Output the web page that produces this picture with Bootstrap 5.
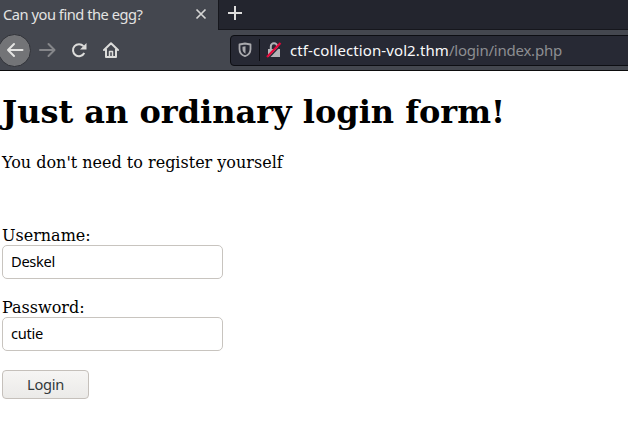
<!DOCTYPE html>
<html lang="en">
<head>
<meta charset="utf-8">
<title>Can you find the egg?</title>
<link rel="stylesheet" href="https://cdn.jsdelivr.net/npm/bootstrap@5.3.0/dist/css/bootstrap.min.css">
<style>
body{font-family:"DejaVu Serif",serif;font-size:16px;line-height:19px;color:#000;background:#fff;overflow:hidden}
.ui-font{font-family:"Noto Sans",sans-serif}
.tab-strip{height:30px;background:#23252e}
.page-tab{width:218px;background:#44474f;color:#e3e3e2;font-size:14.67px;letter-spacing:-.47px;line-height:28px;padding-left:3px;padding-right:11px}
.strip-rest{border-left:1px solid #16171d;border-bottom:1px solid #16171d;padding-left:9px}
.tool-bar{height:41px;background:#44474f;border-bottom:1px solid #0c0c0d}
.back-btn{width:33px;height:33px;margin-left:-2px;margin-right:7px;border-radius:50%;background:#737477;border:1px solid #303238}
.reload{margin-left:15px}
.home{margin-left:16px}
.url-box{height:31px;margin-left:111px;margin-right:-6px;background:#272934;border:1px solid #0d0e13;border-radius:4px;color:#8d8e92;font-size:15px;letter-spacing:-.23px;padding-left:7px}
.url-box b{font-weight:400;color:#f9f9fa;letter-spacing:.1px}
.split{width:1px;height:22px;background:#0d0e13;margin-left:7px;margin-right:6px}
.page{padding:22px 2px 0}
.page h1{font-size:32px;line-height:38px;font-weight:700;margin-bottom:22px}
.page p{margin-bottom:54px}
.field{width:221px;height:34px;padding:0 8px 2px;border:1px solid #c8c4bf;border-radius:5px;font-size:14.67px;letter-spacing:-.3px;color:#000;margin-bottom:19px}
.login{width:87px;height:29px;padding:0;border:1px solid #c5c0bb;border-radius:4px;background:linear-gradient(#f6f5f4,#ebeae8);color:#33393b;font-size:14.67px;letter-spacing:-.3px;line-height:27px}
</style>
<script src="https://cdn.jsdelivr.net/npm/bootstrap@5.3.0/dist/js/bootstrap.bundle.min.js"></script>
</head>
<body>
<header class="ui-font">
  <div class="tab-strip d-flex">
    <div class="page-tab d-flex justify-content-between"><span class="text-nowrap">Can you find the egg?</span>
      <svg class="mt-2" width="12" height="12" viewBox="0 0 12 12" stroke="#d5d5d4" stroke-width="1.7"><path d="M1.5 1.5l9 9M10.5 1.5l-9 9"/></svg>
    </div>
    <div class="strip-rest flex-grow-1"><svg class="d-block" width="16" height="27" viewBox="0 0 16 27" stroke="#dededd" stroke-width="2"><path d="M0 13h14M7 6v14"/></svg></div>
  </div>
  <div class="tool-bar d-flex align-items-center">
    <div class="back-btn d-flex align-items-center justify-content-center flex-shrink-0"><svg width="18" height="16" viewBox="0 0 18 16" fill="none" stroke="#e4e4e2" stroke-width="2" stroke-linecap="round" stroke-linejoin="round"><path d="M16.500 8H2M8 2L2 8l6 6"/></svg></div>
    <svg class="flex-shrink-0" width="18" height="16" viewBox="0 0 18 16" fill="none" stroke="#85868a" stroke-width="2" stroke-linecap="round" stroke-linejoin="round"><path d="M2 8h14M10.500 2l6 6-6 6"/></svg>
    <svg class="reload flex-shrink-0" width="16" height="16" viewBox="0 0 16 16" fill="none" stroke="#dcdcda" stroke-width="2"><path d="M13.300 11A6 6 0 1 1 12.500 4.200"/><path d="M15.500 1v6.500H9z" fill="#dcdcda" stroke="none"/></svg>
    <svg class="home flex-shrink-0" width="16" height="16" viewBox="0 0 16 16" fill="none" stroke="#dcdcda" stroke-width="2" stroke-linejoin="round" stroke-linecap="round"><path d="M1 8l7-6.800L15 8M3 7.500V15h10V7.500"/><path d="M6.500 14.500v-5h3v5" stroke-width="1.500"/></svg>
    <div class="url-box flex-grow-1 d-flex align-items-center text-nowrap">
      <svg width="14" height="16" viewBox="0 0 14 16" fill="none" stroke="#a9a9ad" stroke-width="1.800"><path d="M7 1.500L12.500 2.500V7c0 4-2.200 6.200-5.500 7.200C3.700 13.200 1.500 11 1.500 7V2.500z" stroke-linejoin="round"/><path d="M7.500 4.200v7.500C5.500 10.700 4.500 9 4.500 7V4.800z" fill="#a9a9ad" stroke="none"/></svg>
      <span class="split"></span>
      <svg width="16" height="16" viewBox="0 0 16 16" fill="none"><path d="M4.800 7V4.500a3.200 3.200 0 0 1 6.400 0V7" stroke="#b3b3b7" stroke-width="2"/><path d="M2 7h12v8H2z" fill="#b3b3b7"/><path d="M2.500 16L16 2" stroke="#272934" stroke-width="1.500"/><path d="M1 15L14.500 1" stroke="#e4093a" stroke-width="2.200"/></svg>
      <span class="ms-2"><b>ctf-collection-vol2.thm</b>/login/index.php</span>
    </div>
  </div>
</header>
<main class="page">
  <h1 class="text-nowrap">Just an ordinary login form!</h1>
  <p>You don't need to register yourself</p>
  <form>
    <label class="d-block" for="user">Username:</label>
    <input id="user" class="field ui-font d-block" type="text" value="Deskel">
    <label class="d-block" for="pass">Password:</label>
    <input id="pass" class="field ui-font d-block" type="text" value="cutie">
    <button class="btn login ui-font d-block" type="button">Login</button>
  </form>
</main>
</body>
</html>
